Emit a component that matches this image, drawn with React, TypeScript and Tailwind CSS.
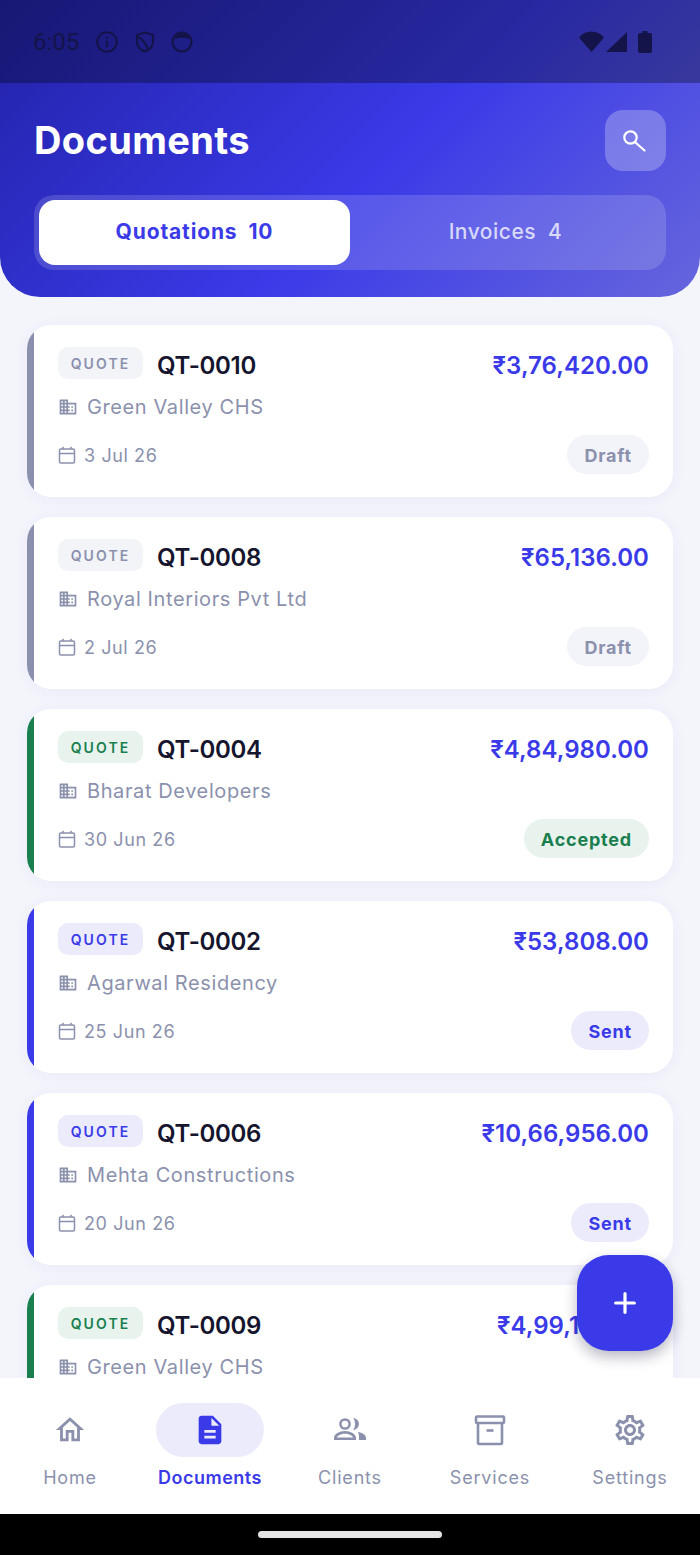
import React from "react";
import { Plus } from "lucide-react";
import { MdBusiness, MdDescription, MdInfoOutline, MdOutlineHome, MdOutlineSettings } from "react-icons/md";

type Status = "Draft" | "Accepted" | "Sent";

const quotes: { id: string; client: string; date: string; amount: string; status: Status }[] = [
  { id: "QT-0010", client: "Green Valley CHS", date: "3 Jul 26", amount: "₹3,76,420.00", status: "Draft" },
  { id: "QT-0008", client: "Royal Interiors Pvt Ltd", date: "2 Jul 26", amount: "₹65,136.00", status: "Draft" },
  { id: "QT-0004", client: "Bharat Developers", date: "30 Jun 26", amount: "₹4,84,980.00", status: "Accepted" },
  { id: "QT-0002", client: "Agarwal Residency", date: "25 Jun 26", amount: "₹53,808.00", status: "Sent" },
  { id: "QT-0006", client: "Mehta Constructions", date: "20 Jun 26", amount: "₹10,66,956.00", status: "Sent" },
  { id: "QT-0009", client: "Green Valley CHS", date: "18 Jun 26", amount: "₹4,99,100.00", status: "Accepted" },
];

const statusStyles = {
  Draft: { bar: "bg-[#8b91ad]", tag: "bg-[#f3f4f8] text-[#8b91ad]", pill: "bg-[#f3f4f9] text-[#8b91ad]" },
  Accepted: { bar: "bg-[#1a7f4e]", tag: "bg-[#e8f3ee] text-[#1a7f4e]", pill: "bg-[#e8f3ee] text-[#1a7f4e]" },
  Sent: { bar: "bg-[#3a3ae8]", tag: "bg-[#ebebfc] text-[#3a3ae8]", pill: "bg-[#ebebfc] text-[#3a3ae8]" },
};

const ArchiveIcon = () => (
  <svg width="32" height="32" viewBox="0 0 32 32" fill="none" stroke="#8b91ad" strokeWidth="2.6" strokeLinejoin="round">
    <rect x="2" y="2.5" width="28" height="6.5" rx="1" />
    <path d="M4 9v20a1 1 0 0 0 1 1h22a1 1 0 0 0 1-1V9" />
    <path d="M12.5 16.5h7" />
  </svg>
);

const ClientsIcon = () => (
  <svg width="36" height="36" viewBox="0 0 36 36" fill="#8b91ad">
    <circle cx="13" cy="12" r="4.600" fill="none" stroke="#8b91ad" strokeWidth="2.500" />
    <path d="M21 6a6 6 0 0 1 0 12c1.500-1.700 2-3.800 2-6s-.5-4.300-2-6z" />
    <path fillRule="evenodd" d="M2 28v-2c0-4 5.500-7 11-7s11 3 11 7v2zM5 25.500h16c-.5-2-4-3.800-8-3.800s-7.500 1.800-8 3.800z" />
    <path d="M26 20c4 .8 8 2.500 8 6v2h-7v-3c0-2-.4-3.500-1-5z" />
  </svg>
);

const CalendarIcon = () => (
  <svg width="18" height="18" viewBox="0 0 18 18" fill="none" stroke="currentColor" strokeWidth="1.500" className="shrink-0">
    <rect x="1.500" y="3" width="15" height="14" rx="1.500" />
    <path d="M1.500 7.500h15M5 .8V3M13 .8V3" />
  </svg>
);

const QuoteCard = ({ q }: { q: (typeof quotes)[number] }) => {
  const s = statusStyles[q.status];
  return (
    <div className="flex h-[172px] shrink-0 overflow-hidden rounded-[24px] bg-white shadow-[0_2px_16px_rgba(58,58,232,0.05)]">
      <div className={`w-[7px] shrink-0 ${s.bar}`} />
      <div className="flex min-w-0 flex-1 flex-col pl-[24px] pr-[24px] pt-[22px]">
        <div className="flex items-start justify-between">
          <div className="flex items-start gap-[14px]">
            <span className={`flex h-[32px] w-[85px] items-center justify-center rounded-[10px] text-[14px] font-semibold tracking-[2.1px] ${s.tag}`}>QUOTE</span>
            <span className="mt-[1px] text-[24px] leading-[36px] font-semibold tracking-[-0.3px] text-[#15152e]">{q.id}</span>
          </div>
          <span className="mt-[1px] text-[24px] leading-[36px] font-semibold tracking-[0.05px] text-[#3a3ae8]">{q.amount}</span>
        </div>
        <div className="mt-[9px] flex items-center gap-[9px] text-[#8b91ad]">
          <MdBusiness size={20} className="shrink-0" />
          <span className="text-[20px] leading-[28px] tracking-[0.6px]">{q.client}</span>
        </div>
        <div className="mt-auto mb-[23px] flex items-center justify-between">
          <div className="flex items-center gap-[8px] text-[#8b91ad]">
            <CalendarIcon />
            <span className="pt-[1px] text-[18px] tracking-[0.6px]">{q.date}</span>
          </div>
          <span className={`flex h-[39px] items-center rounded-full px-[17px] pt-[1px] text-[18px] font-bold tracking-[0.8px] ${s.pill}`}>{q.status}</span>
        </div>
      </div>
    </div>
  );
};

const NavItem = ({ label, icon, active }: { label: string; icon: React.ReactNode; active?: boolean }) => (
  <div className="flex w-[140px] flex-col items-center">
    <div className={`flex h-[54px] w-[108px] items-center justify-center rounded-full ${active ? "bg-[#ebebfc]" : ""}`}>{icon}</div>
    <span className={`mt-[7px] text-[18px] leading-[28px] ${active ? "font-semibold tracking-[0.5px] text-[#3a3ae8]" : "tracking-[0.8px] text-[#8b91ad]"}`}>{label}</span>
  </div>
);

export default function App() {
  return (
    <div className="relative flex h-[1555px] w-[700px] flex-col overflow-hidden bg-[#f4f4fb] font-['Inter',sans-serif]">
      <header className="z-10 shrink-0 rounded-b-[40px] bg-[linear-gradient(135deg,#2222a8_0%,#3a3ae8_55%,#6666dd_100%)]">
        <div className="flex h-[83px] items-center justify-between bg-black/30 pl-[33px] pr-[48px] text-[#14144a]">
          <div className="flex items-center gap-[13px]">
            <span className="mr-[2px] font-['Roboto',sans-serif] text-[24px]">6:05</span>
            <MdInfoOutline size={26} />
            <svg width="24" height="24" viewBox="0 0 24 24" fill="none" stroke="currentColor" strokeWidth="2.2">
              <path d="M12 2.5 20 5v7c0 4.6-3.2 7.8-8 9.5-4.800-1.700-8-4.900-8-9.500V5z" />
              <path d="M5 7c3 1 7 5 10 12" />
            </svg>
            <svg width="24" height="24" viewBox="0 0 24 24" fill="none">
              <circle cx="12" cy="12" r="9.500" stroke="currentColor" strokeWidth="2.200" />
              <path d="M4 9a8.500 8.500 0 0 1 16 0c-3 -1.500-13-1.500-16 0z" fill="currentColor" />
            </svg>
          </div>
          <div className="flex items-center gap-[2px]">
            <svg width="25" height="22" viewBox="0 0 25 22" fill="currentColor"><path d="M0 6.500C6-1.500 19-1.500 25 6.500L12.500 21z" /></svg>
            <svg width="22" height="22" viewBox="0 0 22 22" fill="currentColor" className="mr-[9px] -ml-[1px]"><path d="M22 1v20H1z" /></svg>
            <svg width="14" height="22" viewBox="0 0 14 22" fill="currentColor"><path d="M4.500 0h5v2H12a2 2 0 0 1 2 2v16a2 2 0 0 1-2 2H2a2 2 0 0 1-2-2V4a2 2 0 0 1 2-2h2.500z" /></svg>
          </div>
        </div>
        <div className="px-[34px] pb-[27px] pt-[27px]">
          <div className="flex items-center justify-between">
            <h1 className="text-[38px] font-bold tracking-[0.35px] text-white">Documents</h1>
            <div className="flex h-[61px] w-[61px] items-center justify-center rounded-[18px] bg-white/25">
              <svg width="24" height="24" viewBox="0 0 24 24" fill="none" stroke="white" strokeWidth="2.2" strokeLinecap="round" className="-ml-[2px]">
                <circle cx="7.500" cy="8.500" r="6.200" />
                <path d="M12.200 13.200 21.500 21.500" />
              </svg>
            </div>
          </div>
          <div className="mt-[24px] flex h-[75px] rounded-[20px] bg-white/15 p-[5px]">
            <div className="flex flex-1 items-center justify-center gap-[11px] rounded-[16px] bg-white pb-[2px] text-[21px] font-bold tracking-[0.85px] text-[#3a3ae8]">
              <span>Quotations</span>
              <span>10</span>
            </div>
            <div className="flex flex-1 items-center justify-center gap-[12px] pb-[2px] text-[21px] font-medium tracking-[0.5px] text-white/75">
              <span>Invoices</span>
              <span>4</span>
            </div>
          </div>
        </div>
      </header>

      <main className="flex min-h-0 flex-1 flex-col gap-[20px] overflow-hidden px-[27px] pt-[28px]">
        {quotes.map((q) => (
          <QuoteCard key={q.id} q={q} />
        ))}
      </main>

      <nav className="z-10 flex h-[136px] shrink-0 items-start bg-white pt-[25px]">
        <NavItem label="Home" icon={<MdOutlineHome size={34} color="#8b91ad" />} />
        <NavItem label="Documents" icon={<MdDescription size={34} color="#3a3ae8" />} active />
        <NavItem label="Clients" icon={<ClientsIcon />} />
        <NavItem label="Services" icon={<ArchiveIcon />} />
        <NavItem label="Settings" icon={<MdOutlineSettings size={36} color="#8b91ad" />} />
      </nav>

      <div className="flex h-[41px] shrink-0 items-start justify-center bg-black pt-[17px]">
        <div className="h-[7px] w-[184px] rounded-full bg-[#e4e4e4]" />
      </div>

      <button className="absolute left-[577px] top-[1255px] z-20 flex h-[96px] w-[96px] items-center justify-center rounded-[32px] bg-[#3a3ae8] text-white shadow-[0_6px_14px_rgba(20,20,60,0.3)]">
        <Plus size={32} strokeWidth={2.4} />
      </button>
    </div>
  );
}
